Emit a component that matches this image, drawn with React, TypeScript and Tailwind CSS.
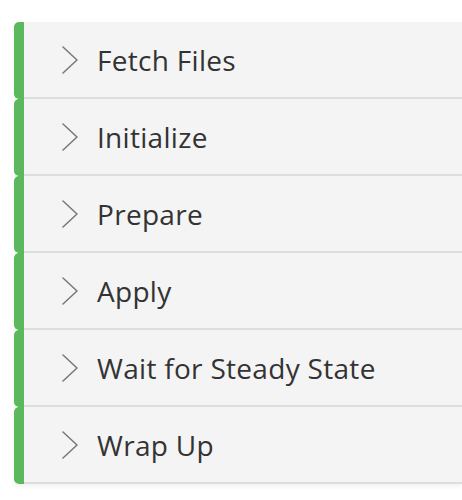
import React from "react";

const steps = [
  "Fetch Files",
  "Initialize",
  "Prepare",
  "Apply",
  "Wait for Steady State",
  "Wrap Up",
];

function Chevron() {
  return (
    <svg width="16" height="28" viewBox="0 0 16 28" fill="none" className="shrink-0">
      <path d="M1 1 L15 14 L1 27" stroke="#777777" strokeWidth="1.5" strokeLinecap="round" strokeLinejoin="round" />
    </svg>
  );
}

export default function App() {
  return (
    <div className="min-h-[500px] w-[462px] bg-white pt-[22px] pl-[14px]" style={{ fontFamily: "'Open Sans', 'Noto Sans', sans-serif" }}>
      <div className="flex flex-col shadow-[0_3px_4px_rgba(0,0,0,0.05)]">
        {steps.map((s) => (
          <div key={s} className="flex h-[77px]">
            <div className="w-[10px] shrink-0 rounded-l-[5px] bg-[#5cb85c]" />
            <div className="flex flex-1 items-center border-b-2 border-[#dddddd] bg-[#f4f4f4] pl-[38px]">
              <Chevron />
              <span className="ml-[19px] text-[28px] leading-none tracking-[0.3px] text-[#333333]">{s}</span>
            </div>
          </div>
        ))}
      </div>
    </div>
  );
}
